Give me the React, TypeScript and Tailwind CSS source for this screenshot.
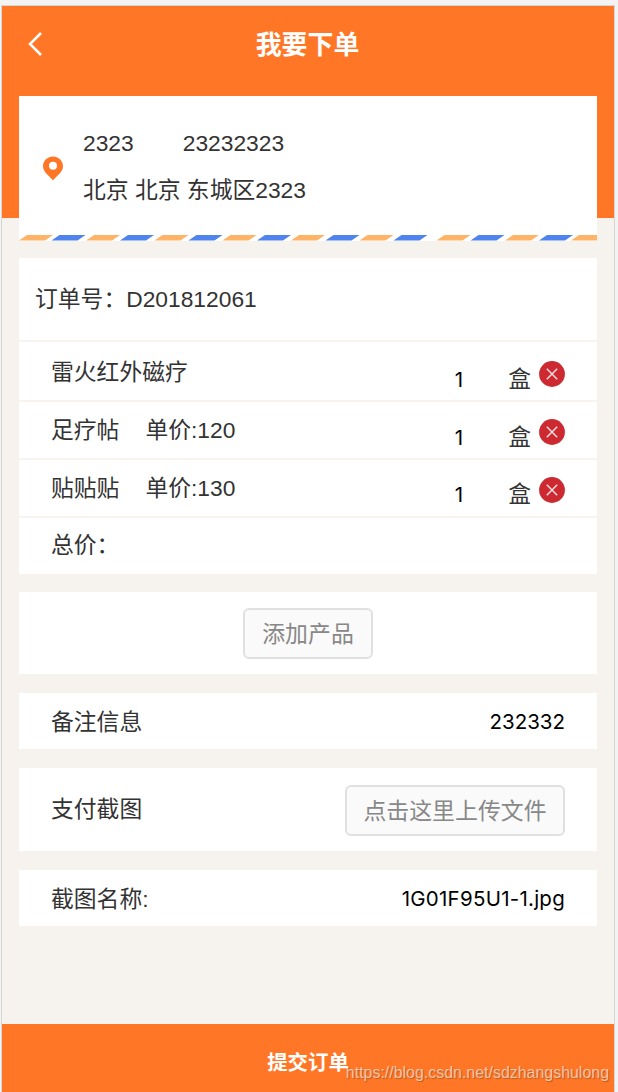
import type { ReactNode } from 'react';

const products = [
  { name: '雷火红外磁疗', price: '', qty: '1', height: 'h-[60px]', lead: 'leading-[61px]', qtyPad: 'pt-[7px]', unitPad: 'pt-[7px]', iconTop: 'mt-[19px]' },
  { name: '足疗帖', price: '单价:120', qty: '1', height: 'h-[58px]', lead: 'leading-[57px]', qtyPad: 'pt-[7px]', unitPad: 'pt-[7px]', iconTop: 'mt-[17px]' },
  { name: '贴贴贴', price: '单价:130', qty: '1', height: 'h-[58px]', lead: 'leading-[57px]', qtyPad: 'pt-[6px]', unitPad: 'pt-[6px]', iconTop: 'mt-[17px]' },
];

const stripeStarts = [0, 32.5, 67, 101, 135.5, 169.5, 203.5, 238, 272, 306.5, 340.5, 374.5, 417.5, 451.5, 486, 520, 552];

function Stripes() {
  return (
    <svg className="block h-[6px] w-[578px]" viewBox="0 0 578 6">
      {stripeStarts.map((x, i) => (
        <path
          key={x}
          d={`M${x} 5.6 L${x + 8} 0.1 H${x + 34} L${x + 26} 5.6 Z`}
          fill={i % 2 ? '#4f84ee' : '#ffb366'}
        />
      ))}
    </svg>
  );
}

function RemoveIcon() {
  return (
    <svg className="block size-[26px]" viewBox="0 0 26 26">
      <circle cx="13" cy="13" r="12.9" fill="#cc2930" />
      <path d="M7.8 7.8 L18.2 18.2 M18.2 7.8 L7.8 18.2" stroke="#f7dcdd" strokeWidth="1.5" />
    </svg>
  );
}

function OutlineButton({ children, className }: { children: ReactNode; className: string }) {
  return (
    <button
      className={`flex items-center justify-center rounded-[6px] border-2 border-[#e0e0e0] bg-[#fafafa] pt-[2px] text-[22.9px] text-[#888888] ${className}`}
    >
      {children}
    </button>
  );
}

export default function App() {
  return (
    <div className="h-[1092px] w-[618px] overflow-hidden bg-[#f3f3f3] pt-[5px] pl-px font-['Liberation_Sans','Noto_Sans_CJK_SC',sans-serif] text-[22.8px] text-[#333333]">
      <div className="flex h-[1087px] w-[614px] flex-col border-x border-t border-[#d6d6d6] bg-[#f6f3ee]">
        <header className="h-[212px] shrink-0 bg-[#ff7726] px-[17px]">
          <div className="flex h-[90px] items-start justify-between">
            <svg className="mt-[26px] ml-[9px] h-[24px] w-[14px]" viewBox="0 0 14 24" fill="none" stroke="white" strokeWidth="2.5">
              <path d="M13 1 L2 12 L13 23" />
            </svg>
            <h1 className="mr-[1px] pt-[19px] text-[25.9px] leading-[40px] font-bold text-white">我要下单</h1>
            <span className="w-[23px]" />
          </div>
          <section className="flex h-[145px] flex-col bg-white">
            <div className="flex h-[139px]">
              <svg className="mt-[60px] ml-[24px] h-[25px] w-[20px]" viewBox="0 0 20 25">
                <path
                  fillRule="evenodd"
                  fill="#ff7726"
                  d="M10 .5 C4.5 .5 0 4.8 0 10.2 C0 15.5 5.5 19.2 10 24.3 C14.5 19.2 20 15.5 20 10.2 C20 4.8 15.5 .5 10 .5 Z M10 5.8 A4 4 0 1 1 10 13.8 A4 4 0 1 1 10 5.8 Z"
                />
              </svg>
              <div className="ml-[20px] pt-[24px]">
                <div className="flex gap-[49px] leading-[46px]">
                  <span>2323</span>
                  <span>23232323</span>
                </div>
                <div className="leading-[48px]">北京 北京 东城区2323</div>
              </div>
            </div>
            <Stripes />
          </section>
        </header>

        <main className="mt-[40px] flex flex-col px-[17px]">
          <section className="h-[316px] bg-white">
            <div className="flex h-[84px] border-b-2 border-[#f9f3ef] pl-[16px] leading-[83px]">
              <span>订单号：</span>
              <span>D201812061</span>
            </div>
            {products.map((p) => (
              <div key={p.name} className={`flex border-b-2 border-[#f9f3ef] pl-[32px] ${p.height}`}>
                <div className={`flex ${p.lead}`}>
                  <span>{p.name}</span>
                  {p.price && <span className="ml-[26px]">{p.price}</span>}
                </div>
                <div className="ml-auto flex pr-[32px]">
                  <span className={`mr-[45px] font-[Inter] text-[20.5px] text-black ${p.lead} ${p.qtyPad}`}>{p.qty}</span>
                  <span className={`mr-[8px] ${p.lead} ${p.unitPad}`}>盒</span>
                  <button className={`h-[26px] ${p.iconTop}`}>
                    <RemoveIcon />
                  </button>
                </div>
              </div>
            ))}
            <div className="pl-[32px] leading-[55px]">总价：</div>
          </section>

          <section className="mt-[18px] flex h-[82px] items-center justify-center bg-white">
            <OutlineButton className="h-[51px] w-[130px]">添加产品</OutlineButton>
          </section>

          <section className="mt-[19px] flex h-[56px] items-center justify-between bg-white px-[32px] pt-[2px]">
            <span>备注信息</span>
            <span className="font-[Inter] text-[20.5px] text-black">232332</span>
          </section>

          <section className="mt-[19px] flex h-[83px] items-center justify-between bg-white px-[32px]">
            <span>支付截图</span>
            <OutlineButton className="mt-px h-[51px] w-[220px]">点击这里上传文件</OutlineButton>
          </section>

          <section className="mt-[19px] flex h-[56px] items-center justify-between bg-white px-[32px] pt-[2px]">
            <span>截图名称:</span>
            <span className="font-[Inter] text-[20.5px] tracking-[0.25px] text-black">1G01F95U1-1.jpg</span>
          </section>
        </main>

        <footer className="relative mt-auto h-[68px] shrink-0 bg-[#ff7726] text-center text-[20.4px] leading-[78px] font-bold text-white">
          提交订单
          <span className="absolute top-[39px] right-[5px] text-[15.95px] leading-[20px] font-normal text-white/60 [text-shadow:1px_1px_1px_rgba(90,50,20,0.4)]">
            https://blog.csdn.net/sdzhangshulong
          </span>
        </footer>
      </div>
    </div>
  );
}
